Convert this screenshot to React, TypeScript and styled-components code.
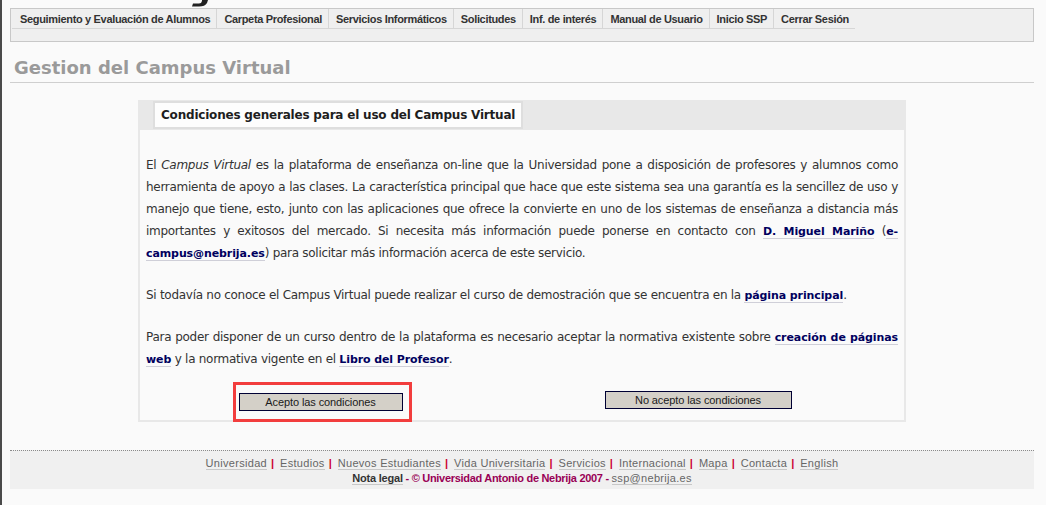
import React from 'react';
import styled, { createGlobalStyle } from 'styled-components';

const GlobalStyle = createGlobalStyle`
  html, body {
    margin: 0;
    padding: 0;
    background: #fafafa;
  }
  body {
    font-family: 'DejaVu Sans', Verdana, sans-serif;
    color: #333;
  }
`;

const Page = styled.div`
  position: relative;
  min-height: 505px;
  box-sizing: border-box;
  border-left: 2px solid #4a4a4a;
  padding: 8px 12px 0 8px;
`;

const LogoTail = styled.svg`
  position: absolute;
  top: 0;
  left: 186px;
`;

const MenuBox = styled.div`
  height: 32px;
  border: 1px solid #c8c8c8;
  background: #efefef;
`;

const TabRow = styled.ul`
  display: flex;
  margin: 0;
  padding: 0 0 0 1px;
  list-style: none;
`;

const Tab = styled.li`
  height: 19px;
  line-height: 20px;
  padding: 0 6px 0 7px;
  border-right: 1px solid #d6d6d6;
  border-bottom: 1px solid #d6d6d6;
  font-family: 'Liberation Sans', Arial, sans-serif;
  font-size: 11px;
  font-weight: bold;
  letter-spacing: -0.33px;
  color: #333;
  white-space: nowrap;
  &:first-child {
    padding-left: 8px;
  }
  &:last-child {
    border-right: none;
  }
`;

const Title = styled.h1`
  margin: 0;
  padding: 14px 0 0 4px;
  height: 26px;
  border-bottom: 1px solid #cfcfcf;
  font-size: 18px;
  line-height: 24px;
  font-weight: bold;
  color: #9a9a9a;
`;

const Panel = styled.div`
  width: 764px;
  margin: 17px auto 0;
  border: 2px solid #e8e8e8;
  border-top: none;
`;

const PanelHead = styled.div`
  height: 30px;
  background: #e8e8e8;
  padding: 1px 0 0 13px;
  box-sizing: border-box;
`;

const PanelTab = styled.div`
  display: inline-block;
  height: 28px;
  box-sizing: border-box;
  padding: 0 6px;
  border: 2px solid #dedede;
  background: #fdfdfd;
  font-size: 12px;
  font-weight: bold;
  letter-spacing: -0.2px;
  line-height: 24px;
  color: #1e1e1e;
`;

const PanelBody = styled.div`
  padding: 24px 6px 0;
`;

const Para = styled.p`
  margin: 0 0 20px;
  font-size: 12px;
  letter-spacing: -0.28px;
  line-height: 22px;
  text-align: justify;
  color: #333;
`;

const Link = styled.a`
  color: #00005e;
  font-size: 11px;
  line-height: 1;
  font-weight: bold;
  letter-spacing: -0.1px;
  text-decoration: none;
  border-bottom: 1px solid #cfcfd8;
`;

const ButtonRow = styled.div`
  display: grid;
  grid-template-columns: 352px 1fr;
  margin-top: -8px;
`;

const Cell = styled.div<{ $pad?: number }>`
  display: flex;
  justify-content: center;
  align-items: flex-start;
  padding-top: ${p => p.$pad || 0}px;
`;

const Highlight = styled.div`
  position: relative;
  margin-bottom: -2px;
  padding: 6px 6px 8px 3px;
  border: 3px solid #f23d3d;
`;

const Button = styled.button<{ $w: number }>`
  width: ${p => p.$w}px;
  height: 18px;
  margin: 0;
  padding: 0;
  background: #d4d0c8;
  border: 1px solid #000033;
  font-family: 'Liberation Sans', Arial, sans-serif;
  font-size: 11px;
  letter-spacing: -0.1px;
  color: #1a1a1a;
`;

const Footer = styled.div`
  margin-top: 28px;
  height: 39px;
  padding-top: 5px;
  box-sizing: border-box;
  border-top: 1px dotted #8a8a8a;
  background: #f0f0f0;
  text-align: center;
  font-family: 'Liberation Sans', Tahoma, sans-serif;
  font-size: 11px;
  line-height: 15px;
`;

const FootLink = styled.a<{ $strong?: boolean }>`
  color: ${p => (p.$strong ? '#333' : '#666')};
  font-weight: ${p => (p.$strong ? 'bold' : 'normal')};
  text-decoration: none;
  border-bottom: 1px solid #c8c8c8;
  letter-spacing: ${p => (p.$strong ? '-0.2px' : '0.3px')};
`;

const Sep = styled.span`
  color: #cc0033;
  font-weight: bold;
  margin: 0 6px 0 4px;
`;

const Copy = styled.span`
  color: #990055;
  font-weight: bold;
  letter-spacing: -0.3px;
`;

const footerLinks = [
  'Universidad',
  'Estudios',
  'Nuevos Estudiantes',
  'Vida Universitaria',
  'Servicios',
  'Internacional',
  'Mapa',
  'Contacta',
  'English',
];

const menuItems = [
  'Seguimiento y Evaluación de Alumnos',
  'Carpeta Profesional',
  'Servicios Informáticos',
  'Solicitudes',
  'Inf. de interés',
  'Manual de Usuario',
  'Inicio SSP',
  'Cerrar Sesión',
];

export default function App() {
  return (
    <>
      <GlobalStyle />
      <Page>
        <LogoTail width='22' height='7' viewBox='0 0 22 7'>
          <path d='M14 0 L20 0 L19 3 Q17 6.5 11 6.5 L4 6.5 L5 3.5 L11 3.5 Q13.5 3.5 14 1 Z' fill='#222' />
        </LogoTail>
        <MenuBox>
          <TabRow>
            {menuItems.map(item => (
              <Tab key={item}>{item}</Tab>
            ))}
          </TabRow>
        </MenuBox>
        <Title>Gestion del Campus Virtual</Title>
        <Panel>
          <PanelHead>
            <PanelTab>Condiciones generales para el uso del Campus Virtual</PanelTab>
          </PanelHead>
          <PanelBody>
            <Para>
              El <i>Campus Virtual</i> es la plataforma de enseñanza on-line que la Universidad pone a
              disposición de profesores y alumnos como herramienta de apoyo a las clases. La característica
              principal que hace que este sistema sea una garantía es la sencillez de uso y manejo que tiene,
              esto, junto con las aplicaciones que ofrece la convierte en uno de los sistemas de enseñanza a
              distancia más importantes y exitosos del mercado. Si necesita más información puede ponerse en
              contacto con <Link href='#'>D. Miguel Mariño</Link> (<Link href='#'>e-campus@nebrija.es</Link>)
              para solicitar más información acerca de este servicio.
            </Para>
            <Para>
              Si todavía no conoce el Campus Virtual puede realizar el curso de demostración que se encuentra
              en la <Link href='#'>página principal</Link>.
            </Para>
            <Para>
              Para poder disponer de un curso dentro de la plataforma es necesario aceptar la normativa
              existente sobre <Link href='#'>creación de páginas web</Link> y la normativa vigente en el{' '}
              <Link href='#'>Libro del Profesor</Link>.
            </Para>
            <ButtonRow>
              <Cell>
                <Highlight>
                  <Button $w={164}>Acepto las condiciones</Button>
                </Highlight>
              </Cell>
              <Cell $pad={9}>
                <Button $w={187}>No acepto las condiciones</Button>
              </Cell>
            </ButtonRow>
          </PanelBody>
        </Panel>
        <Footer>
          <div>
            {footerLinks.map((l, i) => (
              <React.Fragment key={l}>
                <FootLink href='#'>{l}</FootLink>
                {i < footerLinks.length - 1 && <Sep>|</Sep>}
              </React.Fragment>
            ))}
          </div>
          <div>
            <FootLink href='#' $strong>Nota legal</FootLink>
            <Copy> - © Universidad Antonio de Nebrija 2007 - </Copy>
            <FootLink href='#'>ssp@nebrija.es</FootLink>
          </div>
        </Footer>
      </Page>
    </>
  );
}
